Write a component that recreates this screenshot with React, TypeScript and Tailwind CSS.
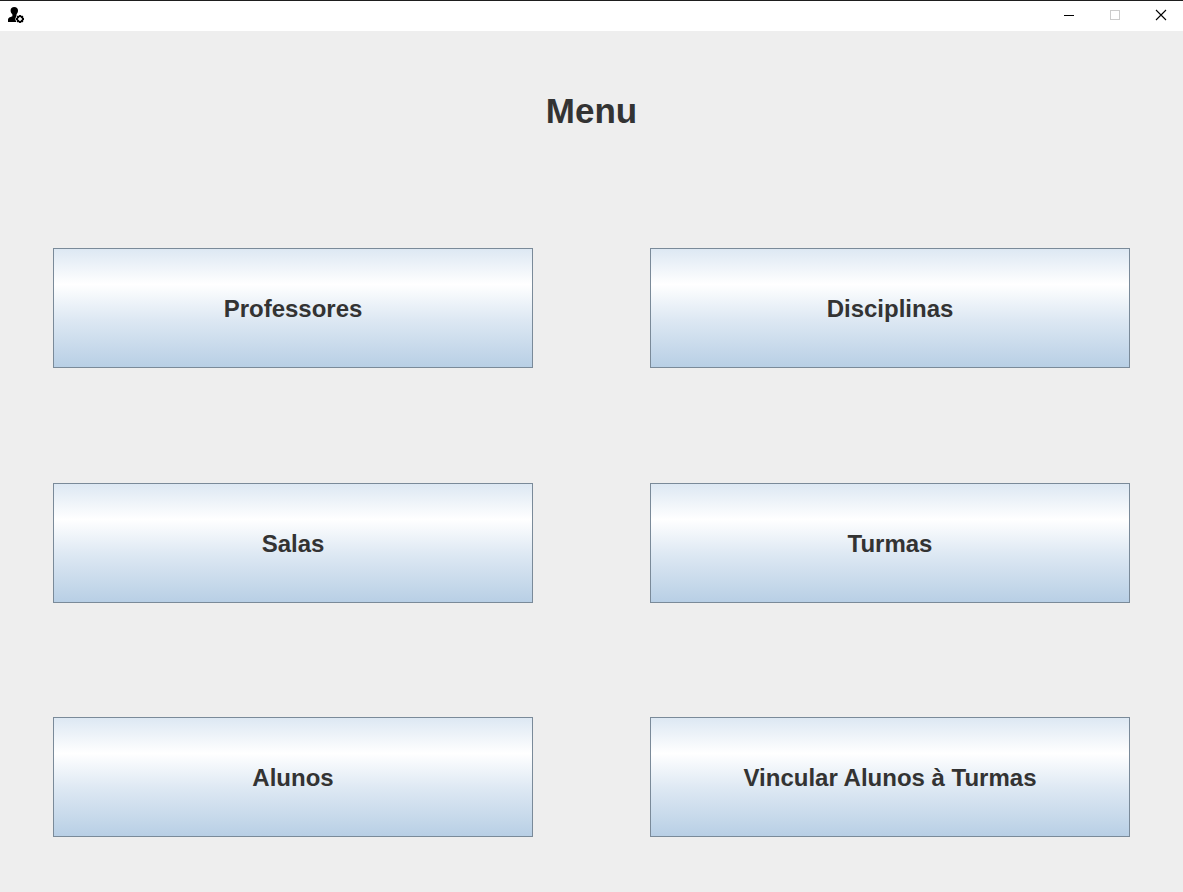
const items: string[] = [
  'Professores',
  'Disciplinas',
  'Salas',
  'Turmas',
  'Alunos',
  'Vincular Alunos à Turmas',
];

function AppIcon() {
  return (
    <svg width="16" height="16" viewBox="0 0 16 16" aria-hidden="true">
      <path
        d="M6.2 0C8.6 0 10 1.3 10 3.6C10 5.4 9.3 6.6 8.5 7.4V9L7.6 12L8.2 15H0V12.6C0 10.8 1.8 10.3 4.4 9.3V7.4C3.3 6.6 2.6 5.4 2.6 3.6C2.6 1.3 4 0 6.2 0Z"
        fill="#000"
      />
      <circle cx="12" cy="12" r="4.5" fill="#fff" />
      <circle cx="12" cy="12" r="3.5" fill="#000" />
      <path
        d="M12 8V16M8 12H16M9.2 9.2L14.8 14.8M14.8 9.2L9.2 14.8"
        stroke="#000"
        strokeWidth="1.8"
      />
      <path d="M12 10V14M10 12H14" stroke="#fff" strokeWidth="1.5" />
    </svg>
  );
}

function TitleBar() {
  const control = 'flex h-7 w-11 items-center justify-center';
  return (
    <header className="flex h-[31px] items-start justify-between border-t border-[#1e1e1e] bg-white pl-2">
      <div className="flex h-7 items-center">
        <AppIcon />
      </div>
      <div className="flex gap-0.5">
        <button type="button" aria-label="Minimizar" className={control}>
          <svg width="10" height="10" viewBox="0 0 10 10" shapeRendering="crispEdges">
            <path d="M0 5.5H10" stroke="#000" />
          </svg>
        </button>
        <button type="button" aria-label="Maximizar" disabled className={control}>
          <svg width="10" height="10" viewBox="0 0 10 10" shapeRendering="crispEdges">
            <path d="M0.5 0.5H9.5V9.5H0.5Z" fill="none" stroke="#ccc" />
          </svg>
        </button>
        <button type="button" aria-label="Fechar" className={control}>
          <svg width="12" height="12" viewBox="0 0 12 12">
            <path d="M1 1L11 11M11 1L1 11" stroke="#000" strokeWidth="1.1" />
          </svg>
        </button>
      </div>
    </header>
  );
}

export default function App() {
  return (
    <div className="flex min-h-screen flex-col bg-[#eeeeee] font-['Liberation_Sans',Arial,sans-serif] font-bold text-[#333333]">
      <TitleBar />
      <main className="flex grow flex-col px-[53px] pt-[58px] pb-[55px]">
        <h1 className="text-center text-[35px] leading-[44px]">Menu</h1>
        <nav
          aria-label="Menu"
          className="mt-[115px] grid grow grid-cols-2 content-between gap-x-[117px] gap-y-8"
        >
          {items.map((item) => (
            <button
              key={item}
              type="button"
              className="h-[120px] border border-[#7a8a99] bg-[linear-gradient(#dde8f3_0%,#ffffff_30%,#dde8f3_60%,#b8cfe5_100%)] pt-0.5 text-2xl"
            >
              {item}
            </button>
          ))}
        </nav>
      </main>
    </div>
  );
}
